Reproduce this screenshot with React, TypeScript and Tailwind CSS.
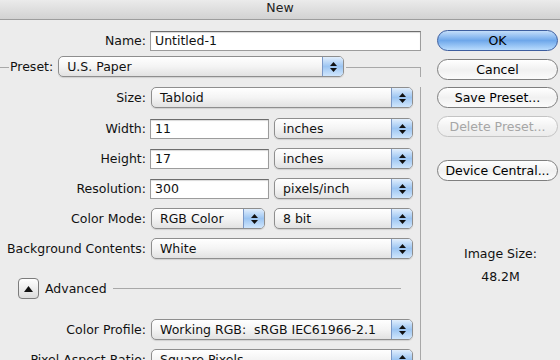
import React from 'react';

const font = { fontFamily: '"DejaVu Sans", "Liberation Sans", sans-serif' };

function Arrows() {
  return (
    <div className="flex h-full w-[21px] flex-col items-center justify-center gap-[2px] rounded-r-[4px] border-l border-[#7b98c6] bg-gradient-to-b from-[#e1eefc] via-[#9cc5f2] to-[#d0e6fc]">
      <svg width="7" height="4" viewBox="0 0 7 4">
        <path d="M3.5 0 L7 4 L0 4 Z" fill="#111" />
      </svg>
      <svg width="7" height="4" viewBox="0 0 7 4">
        <path d="M0 0 L7 0 L3.5 4 Z" fill="#111" />
      </svg>
    </div>
  );
}

function Popup({ text, w }: { text: string; w: string }) {
  return (
    <div
      className={`${w} flex h-[21px] items-center rounded-[5px] border border-[#8e8e8e] bg-gradient-to-b from-white via-[#f4f4f4] to-[#e2e2e2] shadow-[0_1px_1px_rgba(0,0,0,0.12)]`}
    >
      <div className="min-w-0 flex-1 whitespace-pre pl-[8px] text-[12.5px] leading-[16px] text-[#111]">{text}</div>
      <Arrows />
    </div>
  );
}

function Field({ value, w }: { value: string; w: string }) {
  return (
    <div
      className={`${w} flex h-[20px] items-center border border-[#9c9c9c] border-t-[#6e6e6e] bg-white pl-[4px] text-[12.5px] leading-[16px] text-[#111] shadow-[inset_0_1px_1px_rgba(0,0,0,0.15)]`}
    >
      {value}
    </div>
  );
}

function Label({ text }: { text: string }) {
  return <div className="w-[146px] shrink-0 whitespace-nowrap text-right text-[12.5px] leading-[16px] text-[#111]">{text}</div>;
}

function Button({ text, kind }: { text: string; kind?: 'default' | 'disabled' }) {
  const base = 'flex h-[21px] w-full items-center justify-center rounded-full border text-[12.5px] leading-[16px]';
  if (kind === 'default') {
    return (
      <div className={`${base} border-[#3d5e9f] bg-gradient-to-b from-[#c4defa] via-[#6ea7ea] to-[#b9dcfd] text-black`}>
        {text}
      </div>
    );
  }
  if (kind === 'disabled') {
    return (
      <div className={`${base} border-[#c4c4c4] bg-gradient-to-b from-white via-[#f3f3f3] to-[#ececec] text-[#a6a6a6]`}>
        {text}
      </div>
    );
  }
  return (
    <div className={`${base} border-[#7f7f7f] bg-gradient-to-b from-white via-[#f1f1f1] to-[#fbfbfb] text-black`}>
      {text}
    </div>
  );
}

export default function App() {
  return (
    <div className="h-[360px] w-[560px] overflow-hidden bg-[#ececec]" style={font}>
      {/* title bar */}
      <div className="flex h-[20px] items-center justify-center border-b border-[#9d9d9d] bg-gradient-to-b from-[#ebebeb] to-[#d2d2d2] pb-[2px] text-[12.5px] text-[#222]">
        New
      </div>

      <div className="flex">
        {/* left column */}
        <div className="w-[421px] shrink-0">
          <div className="mt-[10px] flex h-[21px] items-center gap-[4px]">
            <Label text="Name:" />
            <Field value="Untitled-1" w="w-[272px]" />
          </div>

          {/* preset row doubling as group box top */}
          <div className="mt-[5px] flex h-[21px] items-stretch">
            <div className="mt-[11px] w-[9px] border-t border-[#a8a8a8]" />
            <div className="flex items-center pl-[1px] text-[12.5px] leading-[16px] text-[#111]">Preset:</div>
            <div className="ml-[5px]">
              <Popup text="U.S. Paper" w="w-[286px]" />
            </div>
            <div className="ml-[2px] mt-[11px] flex-1 border-t border-r border-[#a8a8a8]" />
          </div>

          <div className="border-r border-[#a8a8a8] pb-[20px]">
            <div className="mt-[10px] flex h-[21px] items-center gap-[5px]">
              <Label text="Size:" />
              <Popup text="Tabloid" w="w-[262px]" />
            </div>
            <div className="mt-[10px] flex h-[21px] items-center">
              <Label text="Width:" />
              <div className="ml-[4px]">
                <Field value="11" w="w-[119px]" />
              </div>
              <div className="ml-[5px]">
                <Popup text="inches" w="w-[139px]" />
              </div>
            </div>
            <div className="mt-[9px] flex h-[21px] items-center">
              <Label text="Height:" />
              <div className="ml-[4px]">
                <Field value="17" w="w-[119px]" />
              </div>
              <div className="ml-[5px]">
                <Popup text="inches" w="w-[139px]" />
              </div>
            </div>
            <div className="mt-[9px] flex h-[21px] items-center">
              <Label text="Resolution:" />
              <div className="ml-[4px]">
                <Field value="300" w="w-[119px]" />
              </div>
              <div className="ml-[5px]">
                <Popup text="pixels/inch" w="w-[139px]" />
              </div>
            </div>
            <div className="mt-[9px] flex h-[21px] items-center">
              <Label text="Color Mode:" />
              <div className="ml-[5px]">
                <Popup text="RGB Color" w="w-[114px]" />
              </div>
              <div className="ml-[9px]">
                <Popup text="8 bit" w="w-[139px]" />
              </div>
            </div>
            <div className="mt-[9px] flex h-[21px] items-center gap-[5px]">
              <Label text="Background Contents:" />
              <Popup text="White" w="w-[262px]" />
            </div>

            {/* advanced disclosure */}
            <div className="mt-[19px] flex h-[21px] items-center">
              <div className="ml-[18px] flex h-[21px] w-[21px] items-center justify-center rounded-[4px] border border-[#7c7c7c] bg-gradient-to-b from-white to-[#dcdcdc]">
                <svg width="9" height="6" viewBox="0 0 9 6">
                  <path d="M4.5 0 L9 6 L0 6 Z" fill="#111" />
                </svg>
              </div>
              <div className="ml-[6px] text-[12.5px] leading-[16px] text-[#111]">Advanced</div>
              <div className="ml-[6px] mr-[19px] h-px flex-1 bg-[#a8a8a8]" />
            </div>

            <div className="mt-[20px] flex h-[21px] items-center gap-[5px]">
              <Label text="Color Profile:" />
              <Popup text="Working RGB:  sRGB IEC61966-2.1" w="w-[262px]" />
            </div>
            <div className="mt-[9px] flex h-[21px] items-center gap-[5px]">
              <Label text="Pixel Aspect Ratio:" />
              <Popup text="Square Pixels" w="w-[262px]" />
            </div>
          </div>
        </div>

        {/* right column */}
        <div className="ml-[16px] w-[121px] shrink-0">
          <div className="mt-[10px]">
            <Button text="OK" kind="default" />
          </div>
          <div className="mt-[8px]">
            <Button text="Cancel" />
          </div>
          <div className="mt-[7px]">
            <Button text="Save Preset..." />
          </div>
          <div className="mt-[8px]">
            <Button text="Delete Preset..." kind="disabled" />
          </div>
          <div className="mt-[23px]">
            <Button text="Device Central..." />
          </div>
          <div className="mt-[65px] pl-[6px] text-center text-[12.5px] leading-[16px] text-[#111]">Image Size:</div>
          <div className="mt-[7px] pl-[6px] text-center text-[12.5px] leading-[16px] text-[#111]">48.2M</div>
        </div>
      </div>
    </div>
  );
}
